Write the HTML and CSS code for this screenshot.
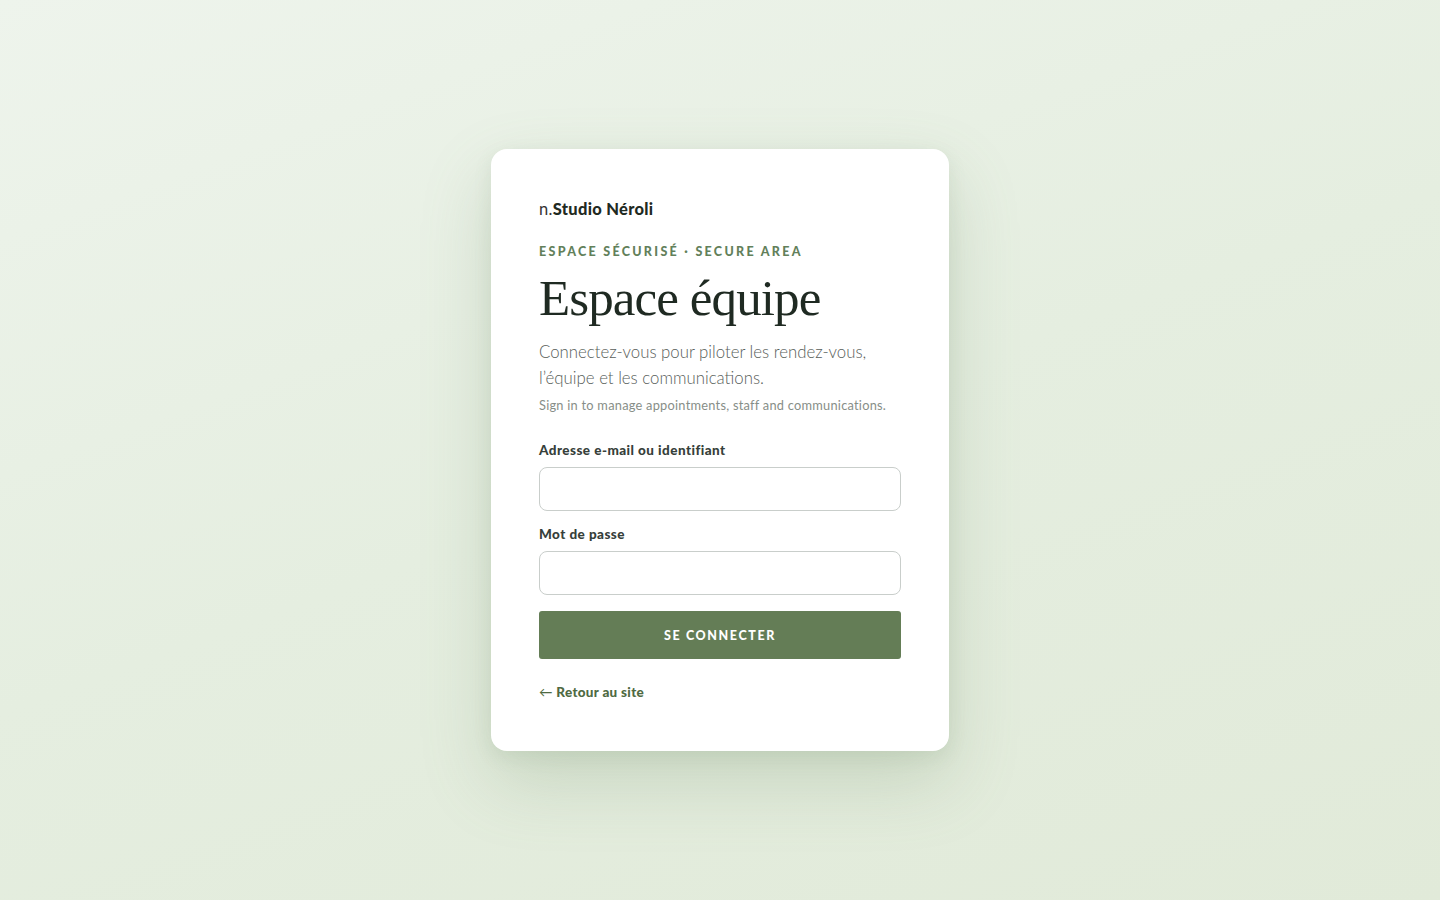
FILE: index.html
```html
<!DOCTYPE html>
<html lang="fr">
<head>
<meta charset="utf-8">
<title>Espace équipe — Studio Néroli</title>
<link rel="stylesheet" href="styles.css">
</head>
<body>
<main class="page">
  <section class="card">
    <div class="brand"><span class="brand-mark">n.</span><span class="brand-name">Studio Néroli</span></div>
    <p class="eyebrow">Espace sécurisé · Secure area</p>
    <h1 class="title">Espace équipe</h1>
    <p class="lead">Connectez-vous pour piloter les rendez-vous, l’équipe et les communications.</p>
    <p class="sub">Sign in to manage appointments, staff and communications.</p>
    <form class="form">
      <label class="label" for="email">Adresse e-mail ou identifiant</label>
      <input class="input" id="email" type="text">
      <label class="label" for="pwd">Mot de passe</label>
      <input class="input input-last" id="pwd" type="password">
      <button class="button" type="button">Se connecter</button>
    </form>
    <a class="back" href="#"><span class="arrow">←</span> Retour au site</a>
  </section>
</main>
</body>
</html>
```

FILE: styles.css
```css
* { box-sizing: border-box; }
html, body { margin: 0; height: 100%; }
body {
  font-family: Lato, "Noto Sans", sans-serif;
  background: linear-gradient(160deg, #eef4ec 0%, #e5eee0 50%, #e1ead9 100%);
  color: #222;
}
.page {
  min-height: 100vh;
  display: flex;
  align-items: center;
  justify-content: center;
}
.card {
  width: 458px;
  background: #fff;
  border-radius: 16px;
  padding: 48px 48px 50px;
  box-shadow: 0 30px 70px rgba(110, 140, 100, 0.24), 0 6px 18px rgba(110, 140, 100, 0.12);
  display: flex;
  flex-direction: column;
}
.brand {
  font-size: 16.5px;
  line-height: 24px;
  letter-spacing: 0.3px;
  color: #1f2a22;
}
.brand-mark { font-weight: 400; color: #333; }
.brand-name { font-weight: 900; }
.eyebrow {
  margin: 23px 0 0;
  font-size: 12.5px;
  line-height: 16px;
  font-weight: 900;
  letter-spacing: 2.3px;
  text-transform: uppercase;
  color: #62805a;
}
.title {
  margin: 10px 0 0;
  font-family: "Liberation Serif", "Times New Roman", serif;
  font-weight: 400;
  font-size: 51px;
  line-height: 56px;
  letter-spacing: -0.9px;
  color: #1f2a22;
}
.lead {
  margin: 13px 0 0;
  font-size: 16.8px;
  line-height: 26px;
  font-weight: 300;
  color: #585e5a;
}
.sub {
  margin: 6px 0 0;
  font-size: 12.8px;
  line-height: 16px;
  font-weight: 400;
  letter-spacing: 0.25px;
  color: #878e88;
}
.form {
  margin-top: 28px;
  display: flex;
  flex-direction: column;
}
.label {
  font-size: 13.5px;
  line-height: 18px;
  font-weight: 900;
  letter-spacing: 0.45px;
  color: #36403a;
  margin-bottom: 8px;
}
.input {
  height: 44px;
  border: 1px solid #c9cecb;
  border-radius: 8px;
  background: #fff;
  margin-bottom: 14px;
  font: inherit;
  padding: 0 14px;
}
.input-last { margin-bottom: 16px; }
.button {
  height: 48px;
  border: 0;
  border-radius: 3px;
  background: #647d56;
  color: #fff;
  font-family: Lato, "Noto Sans", sans-serif;
  font-size: 12.5px;
  font-weight: 900;
  letter-spacing: 1.6px;
  text-transform: uppercase;
}
.back {
  margin-top: 24px;
  font-size: 13.5px;
  line-height: 18px;
  font-weight: 900;
  letter-spacing: 0.3px;
  color: #4f6a42;
  text-decoration: none;
}
.arrow { font-weight: 400; }
```
